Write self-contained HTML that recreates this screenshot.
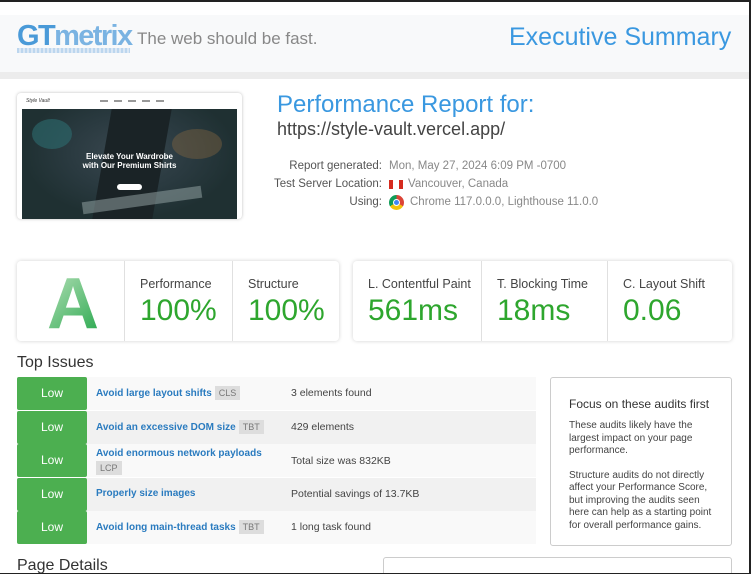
<!DOCTYPE html>
<html><head><meta charset="utf-8"><style>
*{box-sizing:border-box;margin:0;padding:0}
html,body{width:751px;height:574px;overflow:hidden}
body{background:#fff;font-family:"Liberation Sans",Arial,sans-serif;position:relative}
.abs{position:absolute}
.frame{position:absolute;left:0;top:0;width:751px;height:574px;border-top:2px solid #222;border-right:2px solid #222;border-bottom:1px solid #222;pointer-events:none;z-index:10}
.hdr{left:0;top:15px;width:751px;height:57px;background:#f8f9fa}
.strip{left:0;top:72px;width:751px;height:7px;background:#ececec}
.logo{left:17px;top:20px;font-size:29px;font-weight:bold;letter-spacing:-1.6px;color:#4a9ad8}
.logo span{color:#7ab3e2}
.ruler{left:17px;top:48px;width:113px;height:5px;background:repeating-linear-gradient(90deg,#bcd6ee 0 2px,#dbe8f5 2px 4px)}
.tag{left:137px;top:29px;font-size:17px;color:#888}
.exec{left:509px;top:23px;font-size:25px;color:#3a98e0}
.thumb{left:17px;top:93px;width:225px;height:126px;background:#fff;border-radius:4px;box-shadow:0 0 3px rgba(0,0,0,.25)}
.img{left:22px;top:109px;width:215px;height:110px;background:radial-gradient(ellipse at 50% 40%,#3a4850 0,#2a3a40 40%,#1f3032 70%),#2b3a3f;overflow:hidden}
.t1{font-size:24px;color:#3a98e0;left:277px;top:91px}
.t2{font-size:18px;color:#444;left:277px;top:119px}
.lbl{font-size:11.5px;color:#555;text-align:right;width:200px;left:182px}
.val{font-size:11.5px;color:#888;left:389px}
.card{background:#fff;border-radius:4px;box-shadow:0 0 4px rgba(0,0,0,.18);height:80px;top:261px}
.cell{position:absolute;top:0;height:80px;border-left:1px solid #e0e0e0;padding:16px 0 0 15px}
.cell .l{font-size:12.5px;color:#444}
.cell .v{font-size:30px;color:#2ea62e;margin-top:3px}
.h{font-size:16px;color:#333}
.row{left:17px;width:519px;height:33px}
.low{position:absolute;left:0;top:0;width:70px;height:33px;background:#4caf50;color:#fff;font-size:12px;text-align:center;line-height:33px;border-radius:2px}
.ti{position:absolute;left:79px;font-size:10px;font-weight:bold;color:#2a7bbf}
.bd{display:inline-block;background:#ddd;color:#777;font-weight:normal;font-size:9px;padding:2px 4px;margin-left:3px}
.ds{position:absolute;left:274px;top:10px;font-size:10.5px;color:#444}
.focus{left:550px;top:377px;width:182px;height:169px;border:1px solid #ccc;border-radius:3px;padding:19px 18px 0 18px}
.focus h4{font-weight:normal;font-size:12px;color:#333;margin-bottom:9px}
.focus p{font-size:10px;color:#444;line-height:12.5px;margin-bottom:12px}
</style></head><body>
<div class="frame"></div>
<div class="abs hdr"></div><div class="abs strip"></div>
<div class="abs logo">GT<span>metrix</span></div>
<div class="abs ruler"></div>
<div class="abs tag">The web should be fast.</div>
<div class="abs exec">Executive Summary</div>

<div class="abs thumb"></div>
<div class="abs" style="left:26px;top:98px;font-size:5px;font-style:italic;color:#333">Style Vault</div>
<div class="abs" style="left:100px;top:100px;width:70px;height:2px;background:repeating-linear-gradient(90deg,#999 0 8px,transparent 8px 14px)"></div>
<div class="abs img">
 <div class="abs" style="left:80px;top:0;width:60px;height:110px;background:#1a2326;transform:skewX(-10deg)"></div>
 <div class="abs" style="left:10px;top:10px;width:40px;height:30px;background:#2d6d70;opacity:.6;border-radius:50%"></div>
 <div class="abs" style="left:150px;top:20px;width:50px;height:30px;background:#8a6a40;opacity:.4;border-radius:50%"></div>
 <div class="abs" style="left:60px;top:85px;width:120px;height:12px;background:#9aa;opacity:.5;transform:rotate(-8deg)"></div>
 <div class="abs" style="left:0;top:43px;width:215px;text-align:center;color:#fff;font-weight:bold;font-size:8px;line-height:9px">Elevate Your Wardrobe<br>with Our Premium Shirts</div>
 <div class="abs" style="left:95px;top:75px;width:25px;height:6px;background:#fff;border-radius:3px"></div>
</div>

<div class="abs t1">Performance Report for:</div>
<div class="abs t2">https://style-vault.vercel.app/</div>
<div class="abs lbl" style="top:160px">Report generated:</div>
<div class="abs val" style="top:160px">Mon, May 27, 2024 6:09 PM -0700</div>
<div class="abs lbl" style="top:178px">Test Server Location:</div>
<div class="abs" style="left:389px;top:180px;width:14px;height:9px;background:linear-gradient(90deg,#d52b1e 0 30%,#fff 30% 70%,#d52b1e 70%)"></div>
<div class="abs val" style="left:408px;top:178px">Vancouver, Canada</div>
<div class="abs lbl" style="top:196px">Using:</div>
<div class="abs" style="left:389px;top:195px;width:15px;height:15px;border-radius:50%;background:conic-gradient(#db4437 0 120deg,#f4c20d 120deg 240deg,#0f9d58 240deg)"><div style="margin:4px;width:7px;height:7px;border-radius:50%;background:#4285f4;border:1px solid #fff"></div></div>
<div class="abs val" style="left:410px;top:196px">Chrome 117.0.0.0, Lighthouse 11.0.0</div>

<div class="abs card" style="left:17px;width:322px">
 <div class="abs" style="left:30px;top:2px;font-size:72px;font-weight:bold;background:linear-gradient(135deg,#c0e4c0,#1ea446);-webkit-background-clip:text;background-clip:text;color:transparent">A</div>
 <div class="cell" style="left:107px;width:108px"><div class="l">Performance</div><div class="v">100%</div></div>
 <div class="cell" style="left:215px;width:107px"><div class="l">Structure</div><div class="v">100%</div></div>
</div>
<div class="abs card" style="left:353px;width:379px">
 <div class="cell" style="left:0;width:128px;border-left:none"><div class="l">L. Contentful Paint</div><div class="v">561ms</div></div>
 <div class="cell" style="left:128px;width:126px"><div class="l">T. Blocking Time</div><div class="v">18ms</div></div>
 <div class="cell" style="left:254px;width:125px"><div class="l">C. Layout Shift</div><div class="v">0.06</div></div>
</div>

<div class="abs h" style="left:17px;top:354px">Top Issues</div>
<div class="abs row" style="top:377px;background:#f9f9f9"><div class="low">Low</div><div class="ti" style="top:9px">Avoid large layout shifts<span class="bd">CLS</span></div><div class="ds">3 elements found</div></div>
<div class="abs row" style="top:411px;background:#f1f1f1"><div class="low">Low</div><div class="ti" style="top:9px">Avoid an excessive DOM size<span class="bd">TBT</span></div><div class="ds">429 elements</div></div>
<div class="abs row" style="top:444px;background:#f9f9f9"><div class="low">Low</div><div class="ti" style="top:4px">Avoid enormous network payloads<br><span class="bd" style="margin:2px 0 0 0">LCP</span></div><div class="ds" style="top:11px">Total size was 832KB</div></div>
<div class="abs row" style="top:478px;background:#f1f1f1"><div class="low">Low</div><div class="ti" style="top:10px">Properly size images</div><div class="ds">Potential savings of 13.7KB</div></div>
<div class="abs row" style="top:511px;background:#f9f9f9"><div class="low">Low</div><div class="ti" style="top:9px">Avoid long main-thread tasks<span class="bd">TBT</span></div><div class="ds">1 long task found</div></div>

<div class="abs focus"><h4>Focus on these audits first</h4>
<p>These audits likely have the largest impact on your page performance.</p>
<p>Structure audits do not directly affect your Performance Score, but improving the audits seen here can help as a starting point for overall performance gains.</p></div>

<div class="abs h" style="left:17px;top:557px">Page Details</div>
<div class="abs" style="left:383px;top:557px;width:349px;height:30px;border:1px solid #ccc;border-radius:3px"></div>
</body></html>
